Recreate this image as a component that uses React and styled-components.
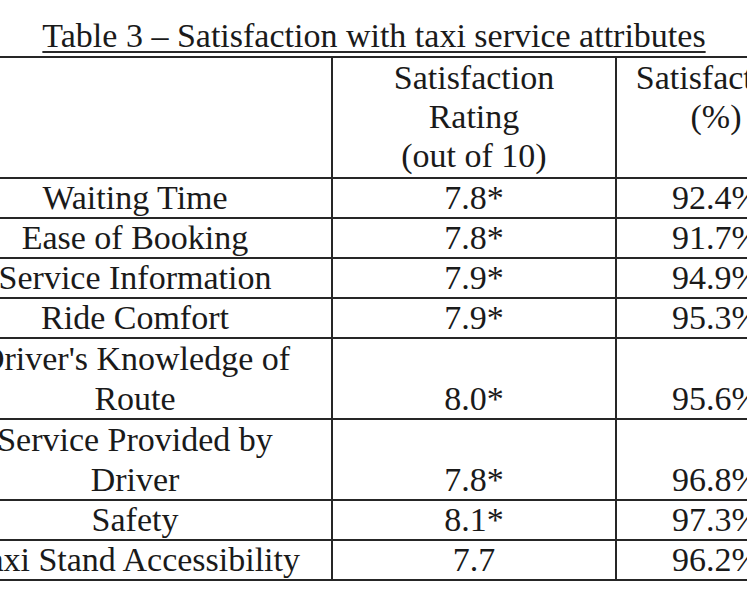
import React from "react";
import styled, { createGlobalStyle } from "styled-components";

const Global = createGlobalStyle`
  html, body {
    margin: 0;
    padding: 0;
    background: #ffffff;
    overflow: hidden;
  }
  body {
    width: 747px;
    height: 598px;
  }
`;

const Page = styled.div`
  width: 878px;
  margin-left: -63px;
  padding-top: 16px;
  font-family: "Liberation Serif", "Times New Roman", serif;
  font-size: 34px;
  color: #1a1a1a;
`;

const Caption = styled.div`
  text-align: center;
  line-height: 40px;
  padding-right: 4px;
  white-space: nowrap;
  text-decoration: underline;
  text-decoration-thickness: 2px;
  text-underline-offset: 4px;
  text-decoration-color: #2a2a2a;
`;

const Table = styled.table`
  width: 878px;
  table-layout: fixed;
  border-collapse: collapse;
`;

const Col = styled.col`
  width: ${(p) => p.$w}px;
`;

const Cell = styled.td`
  border: 2px solid #262626;
  padding: 0;
  text-align: center;
  white-space: nowrap;
  line-height: ${(p) => (p.$tall ? 39.5 : 38)}px;
  vertical-align: ${(p) => (p.$bottom ? "bottom" : "top")};
`;

const HeadCell = styled.th`
  border: 2px solid #262626;
  padding: 0 0 2px;
  font-weight: normal;
  text-align: center;
  white-space: nowrap;
  line-height: 39px;
  vertical-align: top;
`;

const rows = [
  { label: ["Waiting Time"], rating: "7.8*", pct: "92.4%" },
  { label: ["Ease of Booking"], rating: "7.8*", pct: "91.7%" },
  { label: ["Service Information"], rating: "7.9*", pct: "94.9%" },
  { label: ["Ride Comfort"], rating: "7.9*", pct: "95.3%" },
  { label: ["Driver's Knowledge of", "Route"], rating: "8.0*", pct: "95.6%" },
  { label: ["Service Provided by", "Driver"], rating: "7.8*", pct: "96.8%" },
  { label: ["Safety"], rating: "8.1*", pct: "97.3%" },
  { label: ["Taxi Stand Accessibility"], rating: "7.7", pct: "96.2%" },
];

function Lines({ items }) {
  return items.map((t, i) => (
    <React.Fragment key={i}>
      {i > 0 && <br />}
      {t}
    </React.Fragment>
  ));
}

export default function App() {
  return (
    <>
      <Global />
      <Page>
        <Caption>Table 3 – Satisfaction with taxi service attributes</Caption>
        <Table>
          <colgroup>
            <Col $w={394} />
            <Col $w={284} />
            <Col $w={200} />
          </colgroup>
          <thead>
            <tr>
              <HeadCell />
              <HeadCell>
                <Lines items={["Satisfaction", "Rating", "(out of 10)"]} />
              </HeadCell>
              <HeadCell>
                <Lines items={["Satisfaction", "(%)"]} />
              </HeadCell>
            </tr>
          </thead>
          <tbody>
            {rows.map((r) => {
              const tall = r.label.length > 1;
              return (
                <tr key={r.label.join(" ")}>
                  <Cell $tall={tall}>
                    <Lines items={r.label} />
                  </Cell>
                  <Cell $tall={tall} $bottom>
                    {r.rating}
                  </Cell>
                  <Cell $tall={tall} $bottom>
                    {r.pct}
                  </Cell>
                </tr>
              );
            })}
          </tbody>
        </Table>
      </Page>
    </>
  );
}
